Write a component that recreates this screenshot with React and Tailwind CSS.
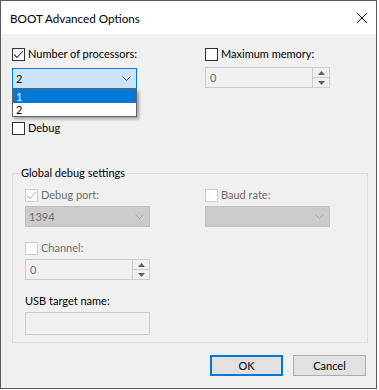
import React from "react";

function Check({ checked, disabled }) {
  return (
    <span
      className={`w-[13px] h-[13px] shrink-0 border bg-white flex items-center justify-center ${
        disabled ? "border-[#cccccc]" : "border-[#333333]"
      }`}
    >
      {checked && (
        <svg width="11" height="11" viewBox="0 0 11 11">
          <path
            d="M1 5.5 L4 8.5 L10 2"
            fill="none"
            stroke={disabled ? "#bcbcbc" : "#333333"}
            strokeWidth="1.1"
          />
        </svg>
      )}
    </span>
  );
}

function CheckRow({ label, checked, disabled }) {
  return (
    <div className="flex items-center h-[14px] gap-[3px]">
      <Check checked={checked} disabled={disabled} />
      <span className={disabled ? "text-[#6d6d6d]" : "text-black"}>{label}</span>
    </div>
  );
}

function Chevron({ color }) {
  return (
    <svg width="9" height="5" viewBox="0 0 9 5">
      <path d="M0.5 0.5 L4.5 4.5 L8.5 0.5" fill="none" stroke={color} strokeWidth="1" />
    </svg>
  );
}

function Combo({ value, active }) {
  return (
    <div
      className={`w-[125px] h-[21px] border flex items-center justify-between pl-[3px] pr-[5px] ${
        active
          ? "border-[#0078d7] bg-[#cce4f7] text-black"
          : "border-[#bfbfbf] bg-[#cccccc] text-[#6d6d6d]"
      }`}
    >
      <span>{value}</span>
      <Chevron color={active ? "#606060" : "#a8a8a8"} />
    </div>
  );
}

function Spinner({ value }) {
  return (
    <div className="w-[125px] h-[21px] border border-[#cccccc] bg-[#f0f0f0] flex">
      <span className="flex-1 pl-[4px] flex items-center text-[#6d6d6d]">{value}</span>
      <div className="w-[17px] flex flex-col border-l border-[#cccccc]">
        <div className="flex-1 flex items-center justify-center border-b border-[#cccccc] bg-[#f0f0f0]">
          <svg width="7" height="4" viewBox="0 0 7 4">
            <path d="M0 4 L3.5 0 L7 4 Z" fill="#606060" />
          </svg>
        </div>
        <div className="flex-1 flex items-center justify-center bg-[#f0f0f0]">
          <svg width="7" height="4" viewBox="0 0 7 4">
            <path d="M0 0 L3.5 4 L7 0 Z" fill="#606060" />
          </svg>
        </div>
      </div>
    </div>
  );
}

export default function App() {
  return (
    <div
      className="w-[379px] h-[390px] bg-white text-[11px] leading-[14px]"
      style={{ fontFamily: "Lato, 'Noto Sans', sans-serif" }}
    >
      <div className="w-[377px] h-[389px] border border-[#5a5a5a] flex flex-col">
        <div className="h-[33px] bg-white flex items-center justify-between pl-[9px] pr-[8px] shrink-0">
          <span className="text-black text-[11.7px]">BOOT Advanced Options</span>
          <svg width="12" height="12" viewBox="0 0 12 12">
            <path d="M1 1 L11 11 M11 1 L1 11" stroke="#111" strokeWidth="1" />
          </svg>
        </div>

        <div className="flex-1 bg-[#f0f0f0] pl-[11px] pt-[13px] flex flex-col">
          <div className="flex">
            <div className="w-[193px] flex flex-col">
              <CheckRow label="Number of processors:" checked />
              <div className="relative mt-[7px]">
                <Combo value="2" active />
                <div className="absolute left-0 top-[21px] w-[125px] border border-[#646464] bg-white shadow-[2px_2px_3px_rgba(0,0,0,0.35)] z-10">
                  <div className="h-[13px] leading-[13px] bg-[#0078d7] text-white pl-[3px]">1</div>
                  <div className="h-[13px] leading-[13px] bg-white text-black pl-[3px]">2</div>
                </div>
              </div>
              <div className="mt-[32px]">
                <CheckRow label="Debug" />
              </div>
            </div>
            <div className="flex flex-col">
              <CheckRow label="Maximum memory:" />
              <div className="mt-[6px]">
                <Spinner value="0" />
              </div>
            </div>
          </div>

          <div className="relative mt-[38px] w-[356px] h-[170px] border border-[#dcdcdc]">
            <span className="absolute left-[7px] top-[-8px] bg-[#f0f0f0] px-[1px] text-black">
              Global debug settings
            </span>
            <div className="pl-[12px] pt-[14px] flex">
              <div className="w-[180px] flex flex-col">
                <CheckRow label="Debug port:" checked disabled />
                <div className="mt-[4px]">
                  <Combo value="1394" />
                </div>
                <div className="mt-[14px]">
                  <CheckRow label="Channel:" disabled />
                </div>
                <div className="mt-[4px]">
                  <Spinner value="0" />
                </div>
                <div className="mt-[14px] text-black">USB target name:</div>
                <div className="mt-[4px] w-[125px] h-[23px] border border-[#cccccc] bg-[#f0f0f0]" />
              </div>
              <div className="flex flex-col">
                <CheckRow label="Baud rate:" disabled />
                <div className="mt-[4px]">
                  <Combo value="" />
                </div>
              </div>
            </div>
          </div>

          <div className="flex justify-end gap-[10px] pr-[10px] mt-[12px]">
            <button className="w-[73px] h-[21px] border-2 border-[#0078d7] bg-[#e1e1e1] text-black">
              OK
            </button>
            <button className="w-[73px] h-[21px] border border-[#adadad] bg-[#e1e1e1] text-black">
              Cancel
            </button>
          </div>
        </div>
      </div>
    </div>
  );
}
